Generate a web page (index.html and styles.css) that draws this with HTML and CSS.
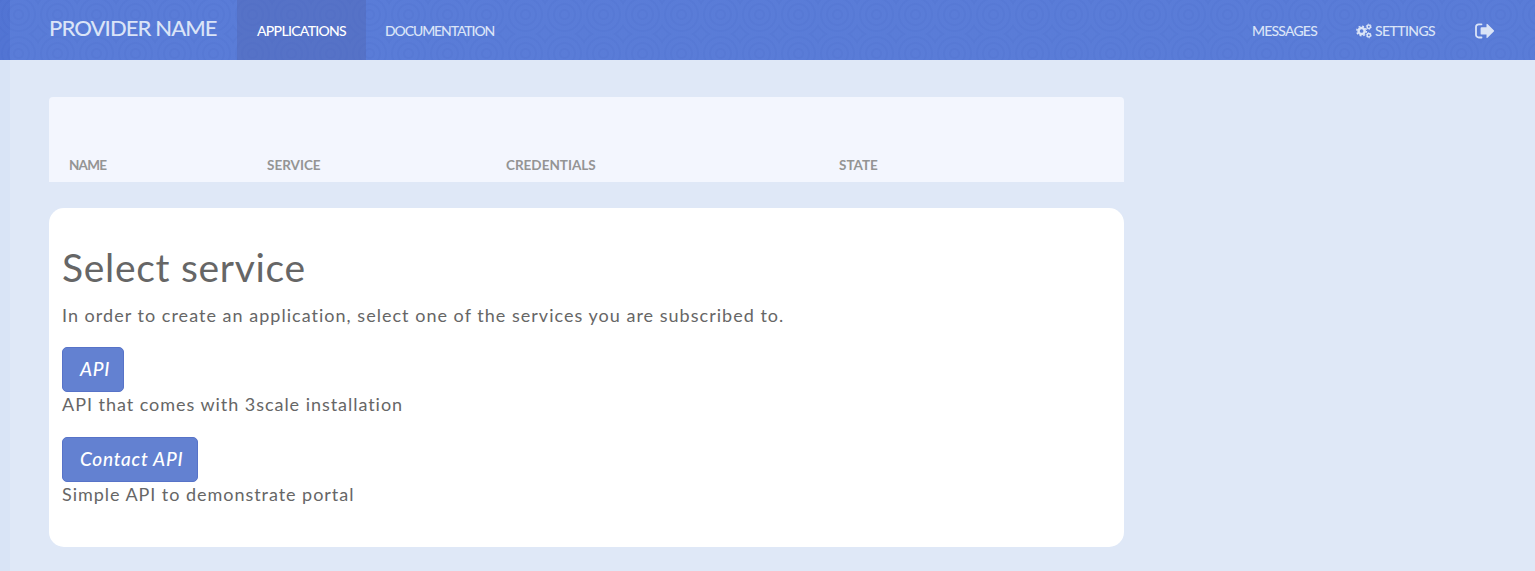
FILE: index.html
```html
<!DOCTYPE html>
<html lang="en">
<head>
<meta charset="utf-8">
<title>Applications</title>
<link rel="stylesheet" href="styles.css">
</head>
<body>
<nav class="navbar">
  <a class="brand">PROVIDER NAME</a>
  <a class="nav-item active">APPLICATIONS</a>
  <a class="nav-item docs">DOCUMENTATION</a>
  <div class="nav-right">
    <a class="nav-item messages">MESSAGES</a>
    <a class="nav-item settings">
      <svg class="cogs" width="16" height="16" viewBox="0 0 16 16" fill="none" stroke="currentColor"><circle cx="5.6" cy="8" r="3.1" stroke-width="2.5"/><circle cx="5.6" cy="8" r="4.8" stroke-width="1.5" stroke-dasharray="1.9 1.87"/><circle cx="12.8" cy="3.7" r="1.7" stroke-width="1.5"/><circle cx="12.8" cy="3.7" r="2.6" stroke-width=".8" stroke-dasharray="1.3 1.42"/><circle cx="12.8" cy="12.3" r="1.7" stroke-width="1.5"/><circle cx="12.8" cy="12.3" r="2.6" stroke-width=".8" stroke-dasharray="1.3 1.42"/></svg>
      <span>SETTINGS</span>
    </a>
    <a class="nav-item signout">
      <svg width="20" height="16" viewBox="0 0 20 16"><path d="M6.5 1.3H3.8A2.8 2.8 0 0 0 1 4.1v7.6a2.8 2.8 0 0 0 2.8 2.8h2.7" fill="none" stroke="currentColor" stroke-width="1.8" stroke-linecap="round"/><path d="M5.6 5.2q0-.9.9-.9h5V1.4q0-1.2 1-.3l6.3 6.2q.7.6 0 1.3l-6.3 6.2q-1 .8-1-.4v-2.8h-5q-.9 0-.9-.9z" fill="currentColor"/></svg>
    </a>
  </div>
</nav>
<main class="content">
  <div class="table-head">
    <span class="col-name">NAME</span><span>SERVICE</span><span>CREDENTIALS</span><span>STATE</span>
  </div>
  <section class="card">
    <h1>Select service</h1>
    <p class="intro">In order to create an application, select one of the services you are subscribed to.</p>
    <div class="service">
      <a class="btn btn-api">API</a>
      <p>API that comes with 3scale installation</p>
    </div>
    <div class="service">
      <a class="btn btn-contact">Contact API</a>
      <p>Simple API to demonstrate portal</p>
    </div>
  </section>
</main>
</body>
</html>
```
FILE: styles.css
```css
* { box-sizing: border-box; }
body {
  margin: 0;
  min-height: 571px;
  background: linear-gradient(90deg, #d9e4f6 10px, #dfe8f7 10px);
  font-family: Lato, "Open Sans", sans-serif;
  color: #666;
}
.navbar {
  display: flex;
  height: 60px;
  padding-left: 49px;
  color: #dae4f7;
  background:
    linear-gradient(90deg, rgba(50, 85, 195, .2) 10px, transparent 10px),
    repeating-radial-gradient(circle at 50% 50%, rgba(92, 128, 219, .4) 0 3px, rgba(82, 117, 209, .18) 4px 5px, rgba(92, 128, 219, .4) 6px) -1px -5px / 39px 39px,
    #587ad6;
}
.brand { width: 188px; padding-top: 14px; font-size: 22px; font-weight: 500; line-height: 27px; white-space: nowrap; letter-spacing: -.9px; }
.nav-item { display: flex; align-items: center; height: 60px; padding: 1px 0 0 19px; font-size: 14px; font-weight: 500; white-space: nowrap; letter-spacing: -.6px; }
.active { width: 129px; padding-left: 20px; color: #fff; background: rgba(80, 100, 175, .4); letter-spacing: -.7px; }
.docs { letter-spacing: -1.1px; }
.nav-right { display: flex; margin-left: auto; }
.messages { width: 104px; padding-left: 0; letter-spacing: -.8px; }
.settings { width: 119px; padding-left: 0; gap: 3px; }
.signout { width: 60px; padding-left: 0; }
.content { width: 1124px; padding: 37px 0 0 49px; }
.table-head {
  display: grid;
  grid-template-columns: 198px 239px 333px 1fr;
  height: 85px;
  padding: 58px 0 0 20px;
  border-radius: 4px 4px 0 0;
  background: #f3f6fe;
  color: #949494;
  font-size: 13.5px;
  font-weight: 700;
  line-height: 20px;
}
.col-name { letter-spacing: -.8px; }
.card { height: 339px; margin-top: 26px; padding: 37px 13px 0; border-radius: 15px; background: #fff; }
h1 { margin: 0; font-size: 39px; font-weight: 400; line-height: 44px; letter-spacing: .7px; }
p { margin: 0; font-size: 18px; line-height: 24px; letter-spacing: .96px; }
.intro { margin-top: 14px; letter-spacing: 1.02px; }
.service { height: 90px; }
.intro + .service { margin-top: 20px; }
.btn {
  display: flex;
  align-items: center;
  height: 45px;
  padding: 0 0 2px 17px;
  border: 1px solid #5773c8;
  border-radius: 5px;
  background: #6381d1;
  color: #fff;
  font-size: 19px;
  font-style: italic;
  font-weight: 500;
  letter-spacing: .75px;
  white-space: nowrap;
}
.btn-api { width: 62px; }
.btn-contact { width: 136px; padding-bottom: 3px; }
```
